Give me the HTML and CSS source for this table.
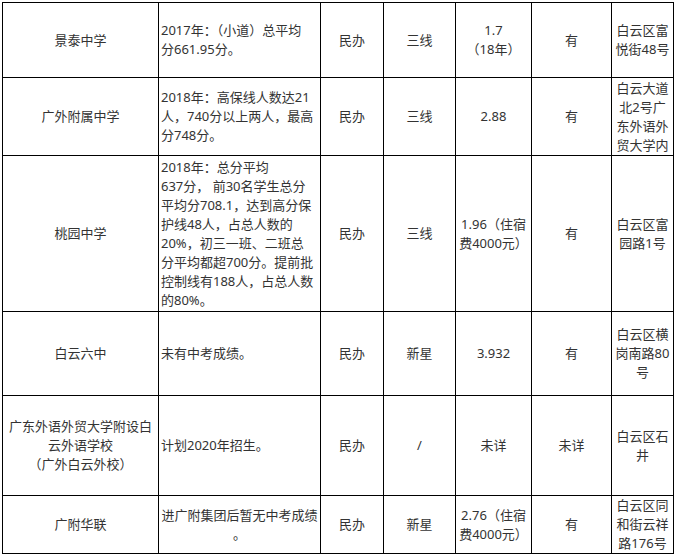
FILE: index.html
```html
<!DOCTYPE html>
<html lang="zh-CN">
<head>
<meta charset="utf-8">
<title>学校列表</title>
<link rel="stylesheet" href="styles.css">
</head>
<body>
<table class="grid">
  <colgroup>
    <col class="c-name">
    <col class="c-score">
    <col class="c-type">
    <col class="c-line">
    <col class="c-fee">
    <col class="c-dorm">
    <col class="c-addr">
  </colgroup>
  <tbody>
    <tr class="r1">
      <td class="center">景泰中学</td>
      <td class="left">2017年：（小道）总平均<br>分661.95分。</td>
      <td class="center">民办</td>
      <td class="center">三线</td>
      <td class="center">1.7<br>（18年）</td>
      <td class="center">有</td>
      <td class="center">白云区富<br>悦街48号</td>
    </tr>
    <tr class="r2">
      <td class="center">广外附属中学</td>
      <td class="left">2018年：高保线人数达21<br>人，740分以上两人，最高<br>分748分。</td>
      <td class="center">民办</td>
      <td class="center">三线</td>
      <td class="center">2.88</td>
      <td class="center">有</td>
      <td class="center">白云大道<br>北2号广<br>东外语外<br>贸大学内</td>
    </tr>
    <tr class="r3">
      <td class="center">桃园中学</td>
      <td class="left">2018年：总分平均<br>637分， 前30名学生总分<br>平均分708.1，达到高分保<br>护线48人，占总人数的<br>20%，初三一班、二班总<br>分平均都超700分。提前批<br>控制线有188人，占总人数<br>的80%。</td>
      <td class="center">民办</td>
      <td class="center">三线</td>
      <td class="center">1.96（住宿<br>费4000元）</td>
      <td class="center">有</td>
      <td class="center">白云区富<br>园路1号</td>
    </tr>
    <tr class="r4">
      <td class="center">白云六中</td>
      <td class="left">未有中考成绩。</td>
      <td class="center">民办</td>
      <td class="center">新星</td>
      <td class="center">3.932</td>
      <td class="center">有</td>
      <td class="center">白云区横<br>岗南路80<br>号</td>
    </tr>
    <tr class="r5">
      <td class="center">广东外语外贸大学附设白<br>云外语学校<br>（广外白云外校）</td>
      <td class="left">计划2020年招生。</td>
      <td class="center">民办</td>
      <td class="center">/</td>
      <td class="center">未详</td>
      <td class="center">未详</td>
      <td class="center">白云区石<br>井</td>
    </tr>
    <tr class="r6">
      <td class="center">广附华联</td>
      <td class="center">进广附集团后暂无中考成绩<br>。</td>
      <td class="center">民办</td>
      <td class="center">新星</td>
      <td class="center">2.76（住宿<br>费4000元）</td>
      <td class="center">有</td>
      <td class="center">白云区同<br>和街云祥<br>路176号</td>
    </tr>
  </tbody>
</table>
</body>
</html>
```

FILE: styles.css
```css
html, body {
  margin: 0;
  padding: 0;
  background: #ffffff;
}

body {
  padding: 2px 0 0 2px;
  font-family: "Noto Sans", "Noto Sans CJK SC", sans-serif;
  font-size: 13px;
  line-height: 19px;
  color: #333333;
}

.grid {
  border-collapse: collapse;
  table-layout: fixed;
  width: 671px;
}

.grid td {
  border: 1px solid #000000;
  padding: 0 2px;
  vertical-align: middle;
  white-space: nowrap;
  overflow: hidden;
}

.c-name { width: 156px; }
.c-score { width: 162px; }
.c-type { width: 63px; }
.c-line { width: 72px; }
.c-fee { width: 76px; }
.c-dorm { width: 80px; }
.c-addr { width: 62px; }

.center { text-align: center; }
.left { text-align: left; padding-left: 3px; }

.r1 td { height: 74px; }
.r2 td { height: 77px; }
.r3 td { height: 155px; }
.r4 td { height: 83px; }
.r5 td { height: 99px; }
.r6 td { height: 57px; }
```
